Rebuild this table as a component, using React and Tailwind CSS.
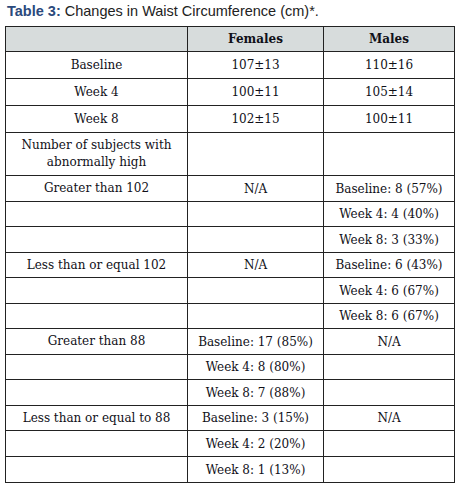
import React from "react";

const rows = [
  ["Baseline", "107±13", "110±16", 27],
  ["Week 4", "100±11", "105±14", 27],
  ["Week 8", "102±15", "100±11", 27],
  ["Number of subjects with abnormally high", "", "", 43],
  ["Greater than 102", "N/A", "Baseline: 8 (57%)", 26],
  ["", "", "Week 4: 4 (40%)", 25],
  ["", "", "Week 8: 3 (33%)", 26],
  ["Less than or equal 102", "N/A", "Baseline: 6 (43%)", 25],
  ["", "", "Week 4: 6 (67%)", 26],
  ["", "", "Week 8: 6 (67%)", 25],
  ["Greater than 88", "Baseline: 17 (85%)", "N/A", 26],
  ["", "Week 4: 8 (80%)", "", 25],
  ["", "Week 8: 7 (88%)", "", 26],
  ["Less than or equal to 88", "Baseline: 3 (15%)", "N/A", 25],
  ["", "Week 4: 2 (20%)", "", 26],
  ["", "Week 8: 1 (13%)", "", 26],
];

export default function App() {
  return (
    <div className="w-[458px] h-[485px] bg-white overflow-hidden">
      <div className="pl-[7px] pt-[2px] h-[26px] text-[14.5px] leading-[19px] text-[#222] font-['Liberation_Sans',Arial,sans-serif]">
        <span className="font-bold text-[#2b4a7c]">Table 3:</span> Changes in Waist Circumference (cm)*.
      </div>
      <table className="ml-[5px] w-[449px] border-collapse table-fixed font-['DejaVu_Serif','Liberation_Serif',serif] text-[12px] text-[#101018]">
        <colgroup>
          <col className="w-[182px]" />
          <col className="w-[136px]" />
          <col className="w-[131px]" />
        </colgroup>
        <thead>
          <tr className="h-[25px] bg-[#d7dcdc]">
            <th className="border border-[#222] p-0"></th>
            <th className="border border-[#222] p-0 font-bold text-center">Females</th>
            <th className="border border-[#222] p-0 font-bold text-center">Males</th>
          </tr>
        </thead>
        <tbody>
          {rows.map((r, i) => (
            <tr key={i} style={{ height: r[3] }}>
              <td className="border border-[#222] px-[10px] py-0 text-center leading-[17px]">{r[0]}</td>
              <td className="border border-[#222] p-0 text-center">{r[1]}</td>
              <td className="border border-[#222] p-0 text-center">{r[2]}</td>
            </tr>
          ))}
        </tbody>
      </table>
    </div>
  );
}
